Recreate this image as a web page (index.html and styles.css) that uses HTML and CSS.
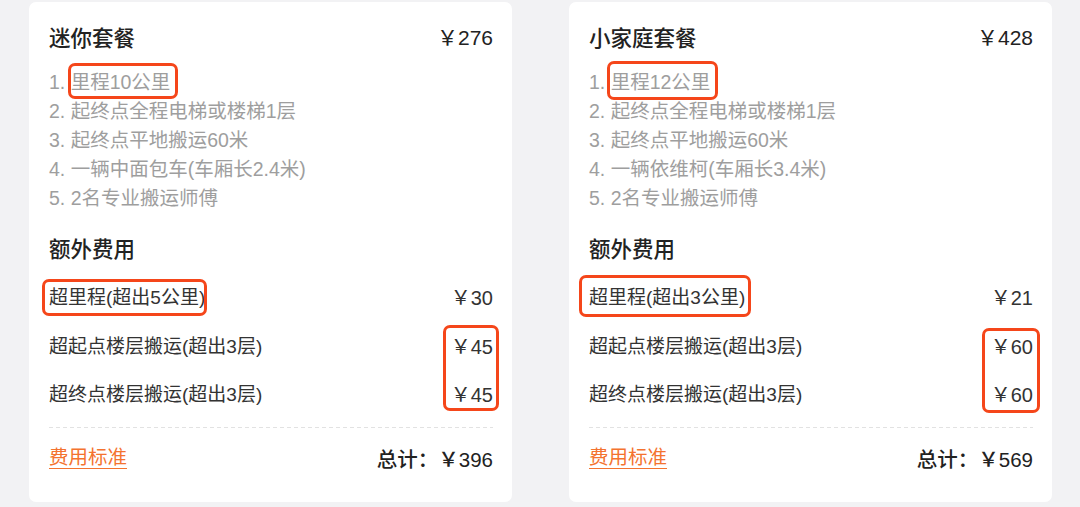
FILE: index.html
```html
<!DOCTYPE html>
<html lang="zh">
<head>
    <meta charset="UTF-8">
    <meta name="viewport" content="width=device-width, initial-scale=1.0">
    <title>搬家套餐</title>
    <link rel="stylesheet" href="styles.css">
</head>
<body>
    <div class="page">
        <div class="card">
            <div class="head">
                <h2>迷你套餐</h2>
                <span class="price">￥276</span>
            </div>
            <ol class="features">
                <li>1. 里程10公里</li>
                <li>2. 起终点全程电梯或楼梯1层</li>
                <li>3. 起终点平地搬运60米</li>
                <li>4. 一辆中面包车(车厢长2.4米)</li>
                <li>5. 2名专业搬运师傅</li>
            </ol>
            <h3>额外费用</h3>
            <div class="extras">
                <div class="row"><span>超里程(超出5公里)</span><span>￥30</span></div>
                <div class="row"><span>超起点楼层搬运(超出3层)</span><span>￥45</span></div>
                <div class="row"><span>超终点楼层搬运(超出3层)</span><span>￥45</span></div>
            </div>
            <div class="dash"></div>
            <div class="foot">
                <a href="#" class="link">费用标准</a>
                <span class="total">总计：￥396</span>
            </div>
            <!-- 标注框 -->
            <div class="mark" style="left: 39px; top: 61px; width: 110px; height: 36px;"></div>
            <div class="mark" style="left: 13px; top: 277px; width: 165px; height: 37px;"></div>
            <div class="mark" style="left: 414px; top: 323px; width: 56px; height: 86px;"></div>
        </div>

        <div class="card">
            <div class="head">
                <h2>小家庭套餐</h2>
                <span class="price">￥428</span>
            </div>
            <ol class="features">
                <li>1. 里程12公里</li>
                <li>2. 起终点全程电梯或楼梯1层</li>
                <li>3. 起终点平地搬运60米</li>
                <li>4. 一辆依维柯(车厢长3.4米)</li>
                <li>5. 2名专业搬运师傅</li>
            </ol>
            <h3>额外费用</h3>
            <div class="extras">
                <div class="row"><span>超里程(超出3公里)</span><span>￥21</span></div>
                <div class="row"><span>超起点楼层搬运(超出3层)</span><span>￥60</span></div>
                <div class="row"><span>超终点楼层搬运(超出3层)</span><span>￥60</span></div>
            </div>
            <div class="dash"></div>
            <div class="foot">
                <a href="#" class="link">费用标准</a>
                <span class="total">总计：￥569</span>
            </div>
            <div class="mark" style="left: 38px; top: 59px; width: 111px; height: 39px;"></div>
            <div class="mark" style="left: 10px; top: 273px; width: 172px; height: 42px;"></div>
            <div class="mark" style="left: 413px; top: 326px; width: 58px; height: 85px;"></div>
        </div>
    </div>
</body>
</html>
```

FILE: styles.css
```css
body {
    margin: 0;
    background-color: #f2f2f4;
    font-family: "Liberation Sans", "Noto Sans CJK SC", sans-serif;
    color: #333;
}
.page {
    display: flex;
    gap: 57px;
    padding: 2px 0 0 29px;
}
.card {
    position: relative;
    width: 483px;
    height: 500px;
    box-sizing: border-box;
    background: white;
    border-radius: 7px;
    padding: 19px 19px 0 20px;
}
.head {
    display: flex;
    justify-content: space-between;
    align-items: center;
    height: 30px;
}
.head h2 {
    margin: 0;
    font-size: 21.5px;
    font-weight: 500;
    color: #222;
}
.price {
    font-size: 21px;
    color: #222;
}
.features {
    list-style: none;
    margin: 17px 0 0;
    padding: 0;
    font-size: 19.5px;
    line-height: 29px;
    color: #9e9e9e;
}
h3 {
    margin: 23px 0 0;
    font-size: 21.5px;
    font-weight: 500;
    line-height: 28px;
    color: #222;
}
.extras {
    display: flex;
    flex-direction: column;
    gap: 20.5px;
    margin-top: 20px;
}
.row {
    display: flex;
    justify-content: space-between;
    font-size: 19px;
    line-height: 28px;
    color: #333;
}
.row span:last-child {
    font-size: 20px;
}
.dash {
    height: 1px;
    margin-top: 18px;
    background: repeating-linear-gradient(to right, #e2e2e2 0 4px, transparent 4px 7px);
}
.foot {
    display: flex;
    justify-content: space-between;
    align-items: center;
    margin-top: 15px;
}
.link {
    font-size: 19.5px;
    color: #f4732f;
    text-decoration: underline;
    text-underline-offset: 4px;
    margin-top: -6px;
}
.total {
    font-size: 20.5px;
    font-weight: 500;
    color: #222;
}
.mark {
    position: absolute;
    box-sizing: border-box;
    border: 3px solid #f5461a;
    border-radius: 7px;
}
```
